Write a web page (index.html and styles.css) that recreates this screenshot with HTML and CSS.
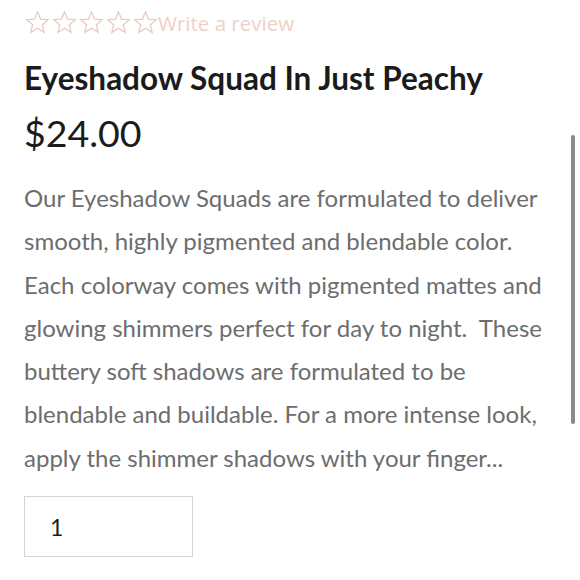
FILE: index.html
```html
<!DOCTYPE html>
<html>
<head>
<meta charset="utf-8">
<link rel="stylesheet" href="styles.css">
</head>
<body>
<main class="product">
  <div class="rating">
    <span class="stars">
      <svg class="star" viewBox="0 0 24 24"><path d="M12 1.8l2.9 6.9 7.4.6-5.6 4.9 1.7 7.3-6.4-3.9-6.4 3.9 1.7-7.3-5.6-4.9 7.4-.6z"/></svg>
      <svg class="star" viewBox="0 0 24 24"><path d="M12 1.8l2.9 6.9 7.4.6-5.6 4.9 1.7 7.3-6.4-3.9-6.4 3.9 1.7-7.3-5.6-4.9 7.4-.6z"/></svg>
      <svg class="star" viewBox="0 0 24 24"><path d="M12 1.8l2.9 6.9 7.4.6-5.6 4.9 1.7 7.3-6.4-3.9-6.4 3.9 1.7-7.3-5.6-4.9 7.4-.6z"/></svg>
      <svg class="star" viewBox="0 0 24 24"><path d="M12 1.8l2.9 6.9 7.4.6-5.6 4.9 1.7 7.3-6.4-3.9-6.4 3.9 1.7-7.3-5.6-4.9 7.4-.6z"/></svg>
      <svg class="star" viewBox="0 0 24 24"><path d="M12 1.8l2.9 6.9 7.4.6-5.6 4.9 1.7 7.3-6.4-3.9-6.4 3.9 1.7-7.3-5.6-4.9 7.4-.6z"/></svg>
    </span>
    <span class="review-link">Write a review</span>
  </div>
  <h1 class="title">Eyeshadow Squad In Just Peachy</h1>
  <div class="price">$24.00</div>
  <p class="description">Our Eyeshadow Squads are formulated to deliver<br>smooth, highly pigmented and blendable color.<br>Each colorway comes with pigmented mattes and<br>glowing shimmers perfect for day to night.&nbsp; These<br>buttery soft shadows are formulated to be<br>blendable and buildable. For a more intense look,<br>apply the shimmer shadows with your finger...</p>
  <div class="qty">1</div>
</main>
<div class="scrollbar"></div>
</body>
</html>
```

FILE: styles.css
```css
html, body {
  margin: 0;
  padding: 0;
  background: #ffffff;
}

.product {
  padding: 11px 24px 0 25px;
  font-family: "Lato", "Open Sans", sans-serif;
}

.rating {
  display: flex;
  align-items: center;
  height: 23px;
}

.stars {
  display: flex;
  gap: 2px;
}

.star {
  width: 25px;
  height: 25px;
  fill: none;
  stroke: #e9c9bf;
  stroke-width: 1.2;
}

.review-link {
  font-family: "Open Sans", sans-serif;
  font-size: 20.5px;
  color: #efd0c6;
}

.title {
  margin: 25px 0 0 -1px;
  font-size: 31.5px;
  line-height: 38px;
  font-weight: 700;
  color: #1b1b1b;
}

.price {
  margin: 14px 0 0 -1px;
  font-size: 37.5px;
  line-height: 44px;
  color: #1b1b1b;
}

.description {
  margin: 21px 0 0 -1px;
  font-size: 24px;
  line-height: 43.3px;
  color: #6d6d6d;
  white-space: nowrap;
}

.qty {
  margin: 17px 0 0 -1px;
  box-sizing: border-box;
  width: 169px;
  height: 61px;
  border: 1.5px solid #d4d4d4;
  display: flex;
  align-items: center;
  padding-left: 25px;
  font-size: 23px;
  color: #1b1b1b;
}

.scrollbar {
  position: absolute;
  top: 135px;
  left: 571px;
  width: 4px;
  height: 289px;
  border-radius: 2px;
  background: #8a8a8a;
}
```
